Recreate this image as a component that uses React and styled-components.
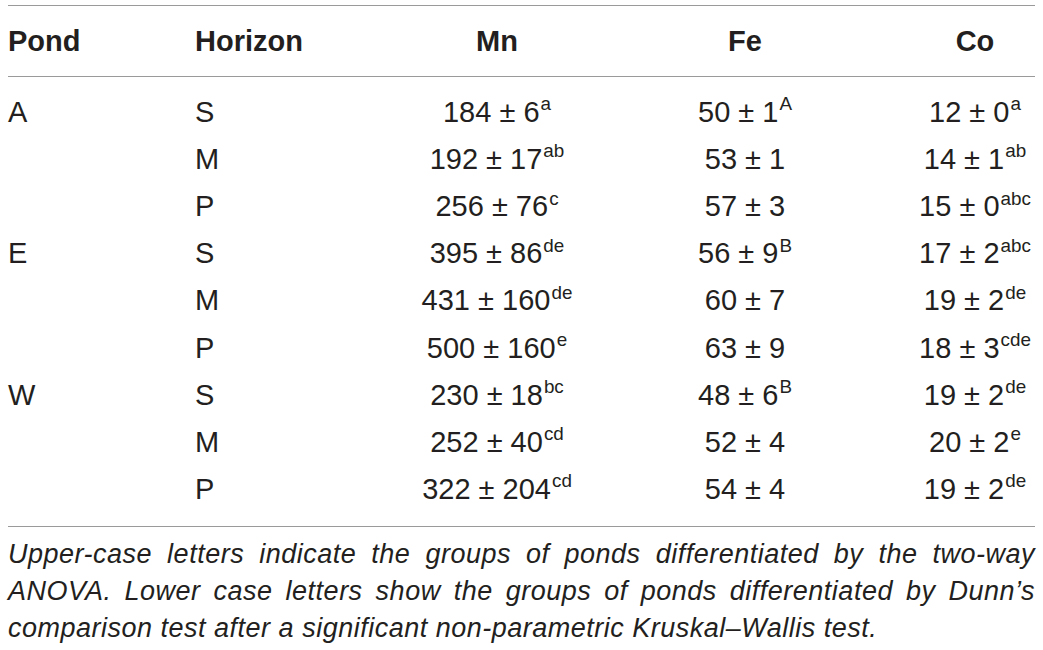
import React from 'react';
import styled, { createGlobalStyle } from 'styled-components';

const GlobalStyle = createGlobalStyle`
    html, body {
        margin: 0;
        padding: 0;
        background: #ffffff;
    }
    body {
        font-family: "Liberation Sans", Arial, sans-serif;
        color: #231f20;
    }
`;

const rows = [
    { pond: 'A', hor: 'S', mn: ['184 ± 6', 'a'], fe: ['50 ± 1', 'A'], co: ['12 ± 0', 'a'] },
    { pond: '', hor: 'M', mn: ['192 ± 17', 'ab'], fe: ['53 ± 1', ''], co: ['14 ± 1', 'ab'] },
    { pond: '', hor: 'P', mn: ['256 ± 76', 'c'], fe: ['57 ± 3', ''], co: ['15 ± 0', 'abc'] },
    { pond: 'E', hor: 'S', mn: ['395 ± 86', 'de'], fe: ['56 ± 9', 'B'], co: ['17 ± 2', 'abc'] },
    { pond: '', hor: 'M', mn: ['431 ± 160', 'de'], fe: ['60 ± 7', ''], co: ['19 ± 2', 'de'] },
    { pond: '', hor: 'P', mn: ['500 ± 160', 'e'], fe: ['63 ± 9', ''], co: ['18 ± 3', 'cde'] },
    { pond: 'W', hor: 'S', mn: ['230 ± 18', 'bc'], fe: ['48 ± 6', 'B'], co: ['19 ± 2', 'de'] },
    { pond: '', hor: 'M', mn: ['252 ± 40', 'cd'], fe: ['52 ± 4', ''], co: ['20 ± 2', 'e'] },
    { pond: '', hor: 'P', mn: ['322 ± 204', 'cd'], fe: ['54 ± 4', ''], co: ['19 ± 2', 'de'] },
];

// 값 + 위첨자 문자
const Value = ({ v }) => (
    <Num>
        {v[0]}
        {v[1] && <Sup>{v[1]}</Sup>}
    </Num>
);

const App = () => {
    return (
        <Page>
            <GlobalStyle />
            <Table>
                <HeadRow>
                    <Cell>Pond</Cell>
                    <Cell>Horizon</Cell>
                    <Cell center>Mn</Cell>
                    <Cell center>Fe</Cell>
                    <Cell center>Co</Cell>
                </HeadRow>
                <Body>
                    {rows.map((r, idx) => (
                        <Row key={idx}>
                            <Cell>{r.pond}</Cell>
                            <Cell>{r.hor}</Cell>
                            <Cell center><Value v={r.mn} /></Cell>
                            <Cell center><Value v={r.fe} /></Cell>
                            <Cell center><Value v={r.co} /></Cell>
                        </Row>
                    ))}
                </Body>
            </Table>
            <Caption>
                Upper-case letters indicate the groups of ponds differentiated by the two-way
                ANOVA. Lower case letters show the groups of ponds differentiated by Dunn’s
                comparison test after a significant non-parametric Kruskal–Wallis test.
            </Caption>
        </Page>
    );
};

const Page = styled.div`
    width: 1027px;
    padding: 5px 8px 0;
`;

const Table = styled.div`
    border-top: 1px solid #9a9a9a;
    border-bottom: 1px solid #9a9a9a;
`;

const HeadRow = styled.div`
    display: grid;
    grid-template-columns: 187px 224px 156px 340px 120px;
    height: 70px;
    align-items: center;
    border-bottom: 1px solid #9a9a9a;
    font-weight: 700;
    font-size: 29px;
`;

const Body = styled.div`
    padding: 12px 0 13px;
`;

const Row = styled.div`
    display: grid;
    grid-template-columns: 187px 224px 156px 340px 120px;
    height: 47.1px;
    align-items: center;
    font-size: 29px;
`;

const Cell = styled.div`
    display: flex;
    justify-content: ${(props) => (props.center ? 'center' : 'flex-start')};
    white-space: nowrap;
`;

const Num = styled.span`
    white-space: nowrap;
`;

const Sup = styled.span`
    font-size: 0.65em;
    position: relative;
    top: -0.62em;
    margin-left: 1px;
`;

const Caption = styled.p`
    margin: 0;
    padding-top: 9px;
    font-style: italic;
    font-size: 27px;
    letter-spacing: 0.5px;
    line-height: 37px;
    text-align: justify;
    color: #231f20;
`;

export default App;
